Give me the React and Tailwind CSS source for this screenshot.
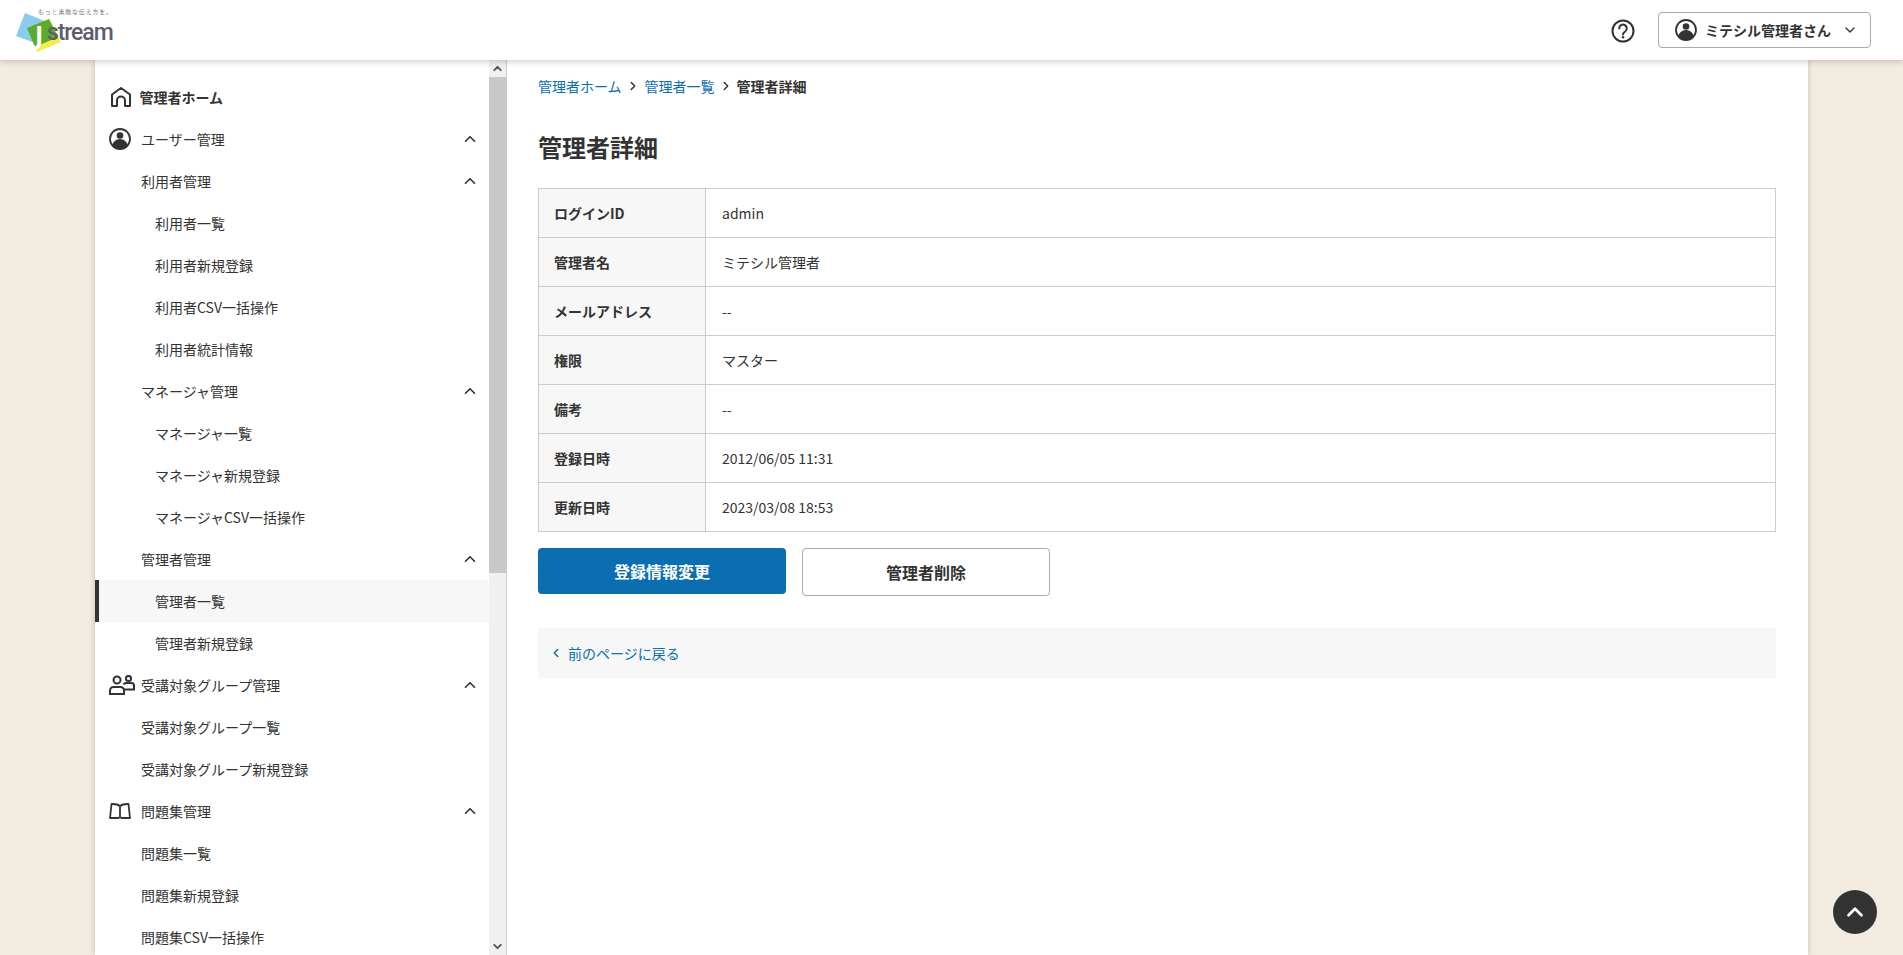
import { ChevronUp, ChevronDown, ChevronRight, ChevronLeft } from "lucide-react";

const font = "font-['Noto_Sans_CJK_JP','Noto_Sans',sans-serif]";

function HomeIcon() {
    return (
        <svg width="20" height="20" viewBox="0 0 20 20" fill="none" stroke="#333" strokeWidth="2">
            <path d="M1 19V7.500L10 1l9 6.500V19h-5v-5.500a4 4 0 0 0-8 0V19z" strokeLinejoin="round" />
        </svg>
    );
}

function UserIcon({ size = 22 }) {
    return (
        <svg width={size} height={size} viewBox="0 0 22 22">
            <circle cx="11" cy="11" r="10" fill="#fff" stroke="#333" strokeWidth="1.800" />
            <circle cx="11" cy="7.500" r="3.300" fill="#333" />
            <path d="M3.500 17.500a7.500 6.500 0 0 1 15 0a10 10 0 0 1-15 0z" fill="#333" />
        </svg>
    );
}

function GroupIcon() {
    return (
        <svg width="26" height="20" viewBox="0 0 26 20" fill="none" stroke="#333" strokeWidth="2">
            <circle cx="8" cy="5" r="3.500" />
            <path d="M1 19v-3.500a3.500 3.500 0 0 1 3.500-3.500h7a3.500 3.500 0 0 1 3.500 3.500V19z" />
            <circle cx="19.500" cy="3.500" r="2.600" />
            <path d="M14.500 9.500a3 3 0 0 1 2.500-1.500h5.500a2.500 2.500 0 0 1 2.500 2.500v4h-10" />
        </svg>
    );
}

function BookIcon() {
    return (
        <svg width="22" height="16" viewBox="0 0 22 16" fill="none" stroke="#333" strokeWidth="1.800">
            <path d="M11 3C9 1.300 6 .900 2.500 1L1 15h8.500l1.500-.8l1.500.8H21L19.500 1C16 .900 13 1.300 11 3V14" strokeLinejoin="round" />
        </svg>
    );
}

function Logo() {
    return (
        <div className="relative w-[120px] h-[60px]">
            <svg className="absolute left-0 top-0" width="70" height="56" viewBox="0 0 70 56">
                <polygon points="25,13 16,36 35,43 47,22" fill="#8ccbeb" />
                <polygon points="49,18 61,42 37,52 35,47" fill="#f7ee4e" />
                <polygon points="27,28 49,19 58,37 35,47" fill="#5dab2b" />
            </svg>
            <span className="absolute left-[35px] top-[19px] text-[25px] leading-[30px] font-bold text-white font-['Open_Sans',sans-serif]">J</span>
            <span className="absolute left-[47px] top-[18px] text-[23px] leading-[30px] font-medium tracking-[-1.100px] text-[#5b5e6d] font-['Roboto',sans-serif]">stream</span>
            <span className={`absolute left-[38px] top-[8px] text-[6px] leading-[8px] tracking-[0.800px] whitespace-nowrap text-[#777] ${font}`}>もっと素敵な伝え方を。</span>
        </div>
    );
}

const menu = [
    { label: "管理者ホーム", icon: <HomeIcon />, iconLeft: "left-[16px]", bold: true, pl: "pl-[44.500px]" },
    { label: "ユーザー管理", icon: <UserIcon />, iconLeft: "left-[14px]", chevron: true, pl: "pl-[46px]" },
    { label: "利用者管理", chevron: true, pl: "pl-[46px]" },
    { label: "利用者一覧", pl: "pl-[60px]" },
    { label: "利用者新規登録", pl: "pl-[60px]" },
    { label: "利用者CSV一括操作", pl: "pl-[60px]" },
    { label: "利用者統計情報", pl: "pl-[60px]" },
    { label: "マネージャ管理", chevron: true, pl: "pl-[46px]" },
    { label: "マネージャ一覧", pl: "pl-[60px]" },
    { label: "マネージャ新規登録", pl: "pl-[60px]" },
    { label: "マネージャCSV一括操作", pl: "pl-[60px]" },
    { label: "管理者管理", chevron: true, pl: "pl-[46px]" },
    { label: "管理者一覧", pl: "pl-[56px]", active: true },
    { label: "管理者新規登録", pl: "pl-[60px]" },
    { label: "受講対象グループ管理", icon: <GroupIcon />, iconLeft: "left-[14px]", chevron: true, pl: "pl-[46px]" },
    { label: "受講対象グループ一覧", pl: "pl-[46px]" },
    { label: "受講対象グループ新規登録", pl: "pl-[46px]" },
    { label: "問題集管理", icon: <BookIcon />, iconLeft: "left-[14px]", chevron: true, pl: "pl-[46px]" },
    { label: "問題集一覧", pl: "pl-[46px]" },
    { label: "問題集新規登録", pl: "pl-[46px]" },
    { label: "問題集CSV一括操作", pl: "pl-[46px]" },
];

const details = [
    ["ログインID", "admin"],
    ["管理者名", "ミテシル管理者"],
    ["メールアドレス", "--"],
    ["権限", "マスター"],
    ["備考", "--"],
    ["登録日時", "2012/06/05 11:31"],
    ["更新日時", "2023/03/08 18:53"],
];

function Sidebar() {
    return (
        <aside className="w-[412px] shrink-0 flex border-r border-[#ccc] h-full">
            <nav className="flex-1 pt-[16px] overflow-hidden">
                {menu.map((item) => (
                    <div
                        key={item.label}
                        className={`relative h-[42px] flex items-center pr-[10px] text-[14px] text-[#333] ${item.pl} ${item.bold ? "font-bold" : ""} ${item.active ? "bg-[#f7f7f7] border-l-[4px] border-[#333]" : ""}`}
                    >
                        {item.icon && (
                            <span className={`absolute top-0 h-full flex items-center ${item.iconLeft}`}>{item.icon}</span>
                        )}
                        <span className="flex-1 whitespace-nowrap">{item.label}</span>
                        {item.chevron && <ChevronUp size={18} strokeWidth={2.200} color="#333" />}
                    </div>
                ))}
            </nav>
            <div className="w-[17px] shrink-0 flex flex-col bg-[#f0f0f0]">
                <div className="h-[17px] flex items-center justify-center">
                    <ChevronUp size={13} strokeWidth={3.500} color="#555" />
                </div>
                <div className="h-[496px] bg-[#c8c8c8]" />
                <div className="flex-1" />
                <div className="h-[17px] flex items-center justify-center">
                    <ChevronDown size={13} strokeWidth={3.500} color="#555" />
                </div>
            </div>
        </aside>
    );
}

function Content() {
    return (
        <main className="flex-1 pl-[31px] pr-[32px] pt-[16px]">
            <div className="flex items-center h-[20px] text-[14px]">
                <a className="text-[#0a6eb0]">管理者ホーム</a>
                <ChevronRight size={14} strokeWidth={2.500} color="#333" className="mx-[4.500px]" />
                <a className="text-[#0a6eb0]">管理者一覧</a>
                <ChevronRight size={14} strokeWidth={2.500} color="#333" className="mx-[4px]" />
                <span className="font-bold text-[#333]">管理者詳細</span>
            </div>
            <h1 className="mt-[33px] text-[24px] leading-[36px] font-bold text-[#333]">管理者詳細</h1>
            <table className="mt-[23px] w-full border-collapse text-[14px] text-[#333]">
                <tbody>
                    {details.map(([k, v]) => (
                        <tr key={k} className="h-[49px]">
                            <th className="w-[167px] border border-[#ccc] bg-[#f7f7f7] pl-[15px] text-left font-bold">{k}</th>
                            <td className="border border-[#ccc] pl-[16px]">{v}</td>
                        </tr>
                    ))}
                </tbody>
            </table>
            <div className="mt-[16px] flex items-start gap-[16px]">
                <button className="w-[248px] h-[46px] rounded-[4px] bg-[#0a6eb0] text-white text-[16px] font-bold">登録情報変更</button>
                <button className="w-[248px] h-[48px] rounded-[4px] border border-[#aaa] bg-white text-[#333] text-[16px] font-bold">管理者削除</button>
            </div>
            <div className="mt-[32px] h-[50px] bg-[#f7f7f7] flex items-center pl-[11px] text-[14px] text-[#0a6eb0]">
                <ChevronLeft size={14} strokeWidth={2.500} />
                <span className="ml-[5px]">前のページに戻る</span>
            </div>
        </main>
    );
}

export default function App() {
    return (
        <div className={`relative h-[955px] overflow-hidden flex flex-col bg-[#f2ebe0] ${font}`}>
            <header className="relative z-10 h-[60px] shrink-0 bg-white shadow-[0_2px_6px_rgba(0,0,0,0.18)] flex justify-between">
                <Logo />
                <div className="flex items-center pr-[32px]">
                    <svg className="mt-[2px]" width="24" height="24" viewBox="0 0 24 24" fill="none" stroke="#333" strokeWidth="2">
                        <circle cx="12" cy="12" r="10.500" />
                        <path d="M8.200 9.500a3.800 3.800 0 1 1 6 3c-1.500 1-2.200 1.500-2.200 3" strokeLinecap="round" />
                        <circle cx="12" cy="18.300" r="1.200" fill="#333" stroke="none" />
                    </svg>
                    <div className="ml-[23px] w-[213px] h-[36px] rounded-[4px] border border-[#aaa] flex items-center pl-[16px] pr-[12px] text-[#333]">
                        <UserIcon />
                        <span className="ml-[8px] flex-1 text-[14px] font-bold whitespace-nowrap">ミテシル管理者さん</span>
                        <ChevronDown size={16} strokeWidth={2} />
                    </div>
                </div>
            </header>
            <div className="flex-1 min-h-0 mx-[95px] flex bg-white shadow-[0_0_6px_rgba(0,0,0,0.2)]">
                <Sidebar />
                <Content />
            </div>
            <button className="absolute right-[26px] top-[890px] w-[44px] h-[44px] rounded-full bg-[#333] flex items-center justify-center">
                <ChevronUp size={26} strokeWidth={2.500} color="#fff" />
            </button>
        </div>
    );
}
